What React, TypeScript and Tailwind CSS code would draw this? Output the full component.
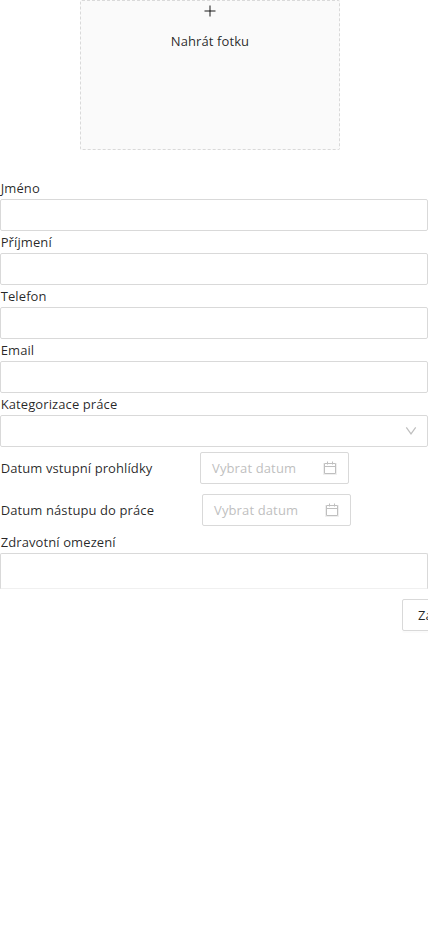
const label = "block h-[22px] pl-[0.7px] leading-[23px] whitespace-nowrap";

function PlusIcon() {
  return (
    <svg width="14" height="14" viewBox="0 0 14 14" className="mt-[3px]" stroke="#000" fill="none">
      <path d="M7 1.5v11M1.5 7h11" strokeOpacity=".9" />
    </svg>
  );
}

function ChevronIcon() {
  return (
    <svg width="12" height="12" viewBox="0 0 12 12" fill="none" stroke="currentColor" strokeWidth="1.2">
      <path d="M1.3 2.4 6 8.9l4.7-6.5" />
    </svg>
  );
}

function CalendarIcon() {
  return (
    <svg width="14" height="14" viewBox="0 0 14 14" fill="none" stroke="currentColor">
      <path d="M1.5 2.5h11v10h-11z" />
      <path d="M1.5 5.5h11M4.5 .5v3M9.5 .5v3" />
      <path d="M.5 2v11.5h13V2" opacity=".25" />
    </svg>
  );
}

function Field({ name }: { name: string }) {
  return (
    <label className="block">
      <span className={label}>{name}</span>
      <input className="block h-8 w-full rounded-xs border border-[#d9d9d9] bg-white px-[11px] outline-none" />
    </label>
  );
}

function DateRow({ name, gap }: { name: string; gap: string }) {
  return (
    <div className="flex h-8 items-center">
      <span className={`${gap} pl-[0.7px] leading-[22px] whitespace-nowrap`}>{name}</span>
      <div className="flex h-8 w-[149px] items-center justify-between rounded-xs border border-[#d9d9d9] pr-[11px] pl-[11px] text-[#bfbfbf]">
        <span className="pt-px leading-[23px] tracking-[0.13px]">Vybrat datum</span>
        <CalendarIcon />
      </div>
    </div>
  );
}

export default function App() {
  return (
    <main className="h-[940px] w-full overflow-hidden bg-white font-['Open_Sans','Noto_Sans',sans-serif] text-[13px] tracking-[0.1px] text-black/85">
      <button className="mx-auto ml-20 flex h-[150px] w-[260px] flex-col items-center rounded-xs border border-dashed border-[#d9d9d9] bg-[#fafafa]">
        <PlusIcon />
        <span className="mt-3 leading-[23px]">Nahrát fotku</span>
      </button>
      <form className="mt-[27px]">
        <Field name="Jméno" />
        <Field name="Příjmení" />
        <Field name="Telefon" />
        <Field name="Email" />
        <span className={label}>Kategorizace práce</span>
        <div className="flex h-8 items-center justify-end rounded-xs border border-[#d9d9d9] pr-[10px] text-[#bfbfbf]">
          <ChevronIcon />
        </div>
        <div className="mt-[5px] flex flex-col gap-[10px]">
          <DateRow name="Datum vstupní prohlídky" gap="w-[200px]" />
          <DateRow name="Datum nástupu do práce" gap="w-[202px]" />
        </div>
        <label className="mt-[5px] block">
          <span className={label}>Zdravotní omezení</span>
          <textarea className="block h-9 w-full resize-none rounded-t-xs border border-[#d9d9d9] border-b-[#f0f0f0] outline-none" />
        </label>
        <button
          type="button"
          className="mt-[10px] ml-[402px] block h-8 w-[90px] rounded-xs border border-[#d9d9d9] pt-px pl-[15px] text-left shadow-[0_2px_0_rgba(0,0,0,0.015)]"
        >
          Založit
        </button>
      </form>
    </main>
  );
}
